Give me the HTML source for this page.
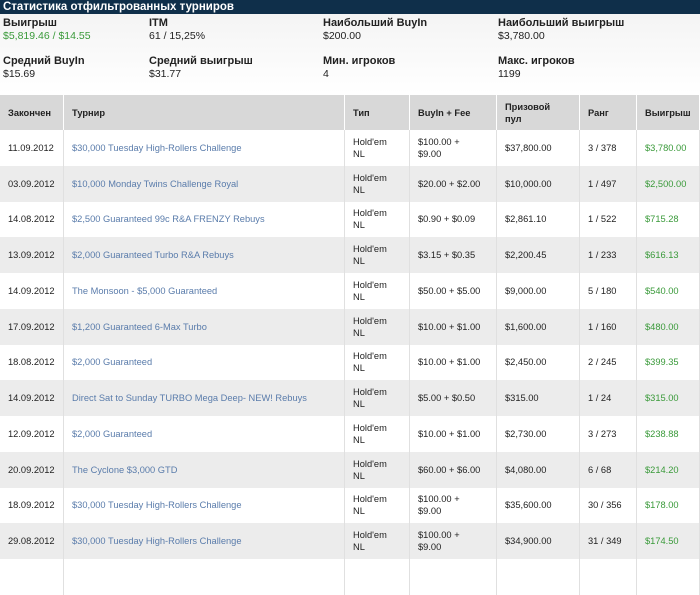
<!DOCTYPE html><html><head><meta charset="utf-8"><style>
*{margin:0;padding:0;box-sizing:border-box}
body{width:700px;height:562px;overflow:hidden;background:#fff;font-family:"Liberation Sans",Arial,sans-serif;color:#222;position:relative}
.bar{position:absolute;left:0;top:0;width:700px;height:14px;background:#0f2f4a;color:#fff;font-weight:bold;font-size:11.5px;line-height:14px;padding-left:3px}
.stats{position:absolute;top:14px;left:0;width:700px;height:80px;background:linear-gradient(#f4f4f4,#fff)}
.s{position:absolute;font-size:10.5px;line-height:12px}
.s b{display:block;font-size:11px;line-height:13px}
.g{color:#3a9a3a}
.row{position:absolute;left:0;width:700px;height:35.75px;font-size:9.3px}
.c{position:absolute;top:0;height:100%;display:flex;align-items:center;padding-left:8px;line-height:12px;border-right:1px solid #e0e0e0}
.h{background:#d8d8d8;font-weight:bold;top:95px;height:35px}
.h .c{border-right:1px solid #fff}
.a{color:#5a7cab}
</style></head><body>
<div class="bar">Статистика отфильтрованных турниров</div>
<div class="stats">
<div class="s" style="left:3px;top:3px"><b>Выигрыш</b><span class="g">$5,819.46 / $14.55</span></div>
<div class="s" style="left:149px;top:3px"><b>ITM</b>61 / 15,25%</div>
<div class="s" style="left:323px;top:3px"><b>Наибольший BuyIn</b>$200.00</div>
<div class="s" style="left:498px;top:3px"><b>Наибольший выигрыш</b>$3,780.00</div>
<div class="s" style="left:3px;top:41px"><b>Средний BuyIn</b>$15.69</div>
<div class="s" style="left:149px;top:41px"><b>Средний выигрыш</b>$31.77</div>
<div class="s" style="left:323px;top:41px"><b>Мин. игроков</b>4</div>
<div class="s" style="left:498px;top:41px"><b>Макс. игроков</b>1199</div>
</div>
<div class="row h">
<div class="c" style="left:0;width:64px">Закончен</div>
<div class="c" style="left:64px;width:281px">Турнир</div>
<div class="c" style="left:345px;width:65px">Тип</div>
<div class="c" style="left:410px;width:87px">BuyIn + Fee</div>
<div class="c" style="left:497px;width:83px">Призовой<br>пул</div>
<div class="c" style="left:580px;width:57px">Ранг</div>
<div class="c" style="left:637px;width:63px">Выигрыш</div>
</div>
<div id="rows"></div>
<script>
var d=[["11.09.2012","$30,000 Tuesday High-Rollers Challenge","$100.00 +<br>$9.00","$37,800.00","3 / 378","$3,780.00"],
["03.09.2012","$10,000 Monday Twins Challenge Royal","$20.00 + $2.00","$10,000.00","1 / 497","$2,500.00"],
["14.08.2012","$2,500 Guaranteed 99c R&amp;A FRENZY Rebuys","$0.90 + $0.09","$2,861.10","1 / 522","$715.28"],
["13.09.2012","$2,000 Guaranteed Turbo R&amp;A Rebuys","$3.15 + $0.35","$2,200.45","1 / 233","$616.13"],
["14.09.2012","The Monsoon - $5,000 Guaranteed","$50.00 + $5.00","$9,000.00","5 / 180","$540.00"],
["17.09.2012","$1,200 Guaranteed 6-Max Turbo","$10.00 + $1.00","$1,600.00","1 / 160","$480.00"],
["18.08.2012","$2,000 Guaranteed","$10.00 + $1.00","$2,450.00","2 / 245","$399.35"],
["14.09.2012","Direct Sat to Sunday TURBO Mega Deep- NEW! Rebuys","$5.00 + $0.50","$315.00","1 / 24","$315.00"],
["12.09.2012","$2,000 Guaranteed","$10.00 + $1.00","$2,730.00","3 / 273","$238.88"],
["20.09.2012","The Cyclone $3,000 GTD","$60.00 + $6.00","$4,080.00","6 / 68","$214.20"],
["18.09.2012","$30,000 Tuesday High-Rollers Challenge","$100.00 +<br>$9.00","$35,600.00","30 / 356","$178.00"],
["29.08.2012","$30,000 Tuesday High-Rollers Challenge","$100.00 +<br>$9.00","$34,900.00","31 / 349","$174.50"],
["","","","","",""]];
var h="";d.forEach(function(r,i){h+='<div class="row" style="top:'+(130+i*35.75)+'px;background:'+(i%2?'#ececec':'#fff')+'">'+
'<div class="c" style="left:0;width:64px">'+r[0]+'</div>'+
'<div class="c a" style="left:64px;width:281px">'+r[1]+'</div>'+
'<div class="c" style="left:345px;width:65px">'+(r[0]?"Hold'em<br>NL":"")+'</div>'+
'<div class="c" style="left:410px;width:87px">'+r[2]+'</div>'+
'<div class="c" style="left:497px;width:83px">'+r[3]+'</div>'+
'<div class="c" style="left:580px;width:57px">'+r[4]+'</div>'+
'<div class="c g" style="left:637px;width:63px">'+r[5]+'</div></div>';});
document.getElementById("rows").innerHTML=h;
</script>
</body></html>
